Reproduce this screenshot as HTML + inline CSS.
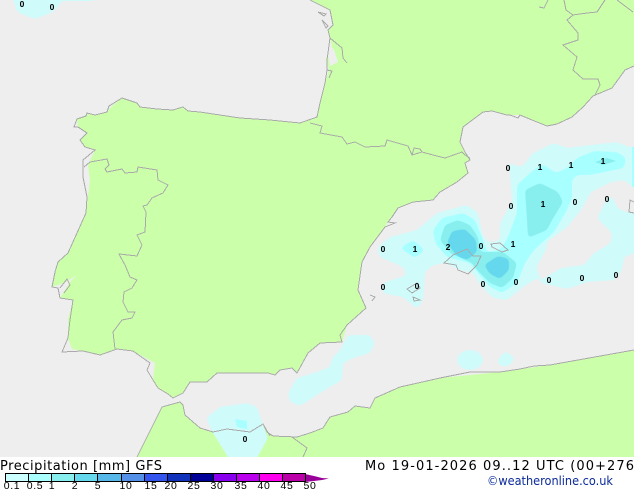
<!DOCTYPE html>
<html><head><meta charset="utf-8"><style>
html,body{margin:0;padding:0;background:#fff;width:634px;height:490px;overflow:hidden}
svg{display:block}
.l{fill:#000;font:bold 8.500px "Liberation Sans",sans-serif;text-anchor:middle}
.t{fill:#000;font-family:"DejaVu Sans","Liberation Sans",sans-serif}
.n{font-size:10.500px;text-anchor:middle;font-family:"Liberation Sans",sans-serif;letter-spacing:.6px}
</style></head><body>
<svg width="634" height="490" viewBox="0 0 634 490" xmlns="http://www.w3.org/2000/svg">
<defs>
<filter id="r" filterUnits="userSpaceOnUse" x="-20" y="-20" width="680" height="520" color-interpolation-filters="sRGB">
<feGaussianBlur stdDeviation="2"/>
<feComponentTransfer><feFuncA type="linear" slope="6" intercept="-2.500"/></feComponentTransfer>
</filter>
</defs>
<rect width="634" height="457" fill="#eeeeee"/>
<!-- Land -->
<path fill="#ccffaa" d="M78,127 77,119 86,116 87,113 95,115 107,112 112,106 122,98 137,103 140,107 157,109 173,110 183,107 188,111 200,112 240,118 270,120 300,123 317,117 320,103 325,83 329,70 326,58 332,46 330,38 328,30 333,25 330,10 310,0 634,0 634,66 625,70 612,88 593,96 583,107 572,117 557,124 547,126 532,120 520,115 507,115 492,111 483,112 463,127 460,142 465,152 470,160 465,163 468,173 457,182 440,192 433,200 413,202 398,208 392,217 388,222 385,227 370,247 362,262 358,290 366,308 347,325 342,342 320,343 308,353 297,373 292,368 280,370 275,375 268,373 217,373 207,382 190,382 183,393 173,398 168,394 158,388 153,380 155,363 133,351 117,349 100,355 83,351 72,349 68,338 68,320 73,300 60,298 70,282 77,275 64,283 52,287 55,272 58,262 68,253 77,233 86,213 90,180 88,165 95,150 85,147 80,140 87,133Z"/>
<path fill="#ccffaa" d="M137,457 162,407 180,402 183,405 185,415 200,428 213,432 227,429 250,432 263,424 267,432 273,436 297,437 310,433 323,428 330,417 348,412 355,406 370,408 375,398 400,387 440,378 500,372 550,365 634,350 634,457Z"/>
<path fill="#eeeeee" d="M329,44 334,50 338,62 330,66 327,50Z"/>
<path fill="#ccffaa" d="M470,273 476,270 472,266 467,270Z"/>
<!-- Precip 0.1 -->
<g fill="#d0fbfb" filter="url(#r)">
<path d="M377,248 390,237 417,230 437,213 467,205 478,213 483,237 490,243 500,240 500,223 512,202 510,173 507,163 522,167 533,153 554,143 567,148 591,145 617,142 629,147 645,147 645,192 634,188 624,180 611,182 591,192 581,210 567,227 547,242 546,250 536,267 541,280 561,268 584,265 594,253 611,243 612,233 597,218 608,197 613,197 617,208 629,213 645,213 645,253 634,253 624,257 622,270 614,280 587,282 567,289 541,283 537,278 523,287 507,300 493,298 480,285 473,273 460,270 445,263 433,265 425,272 423,300 417,309 403,297 382,293 383,283 407,275 403,267 380,257Z"/>
<path d="M11,-8 17,12 35,19 53,12 70,-8Z"/>
<path d="M206,418 220,407 247,403 257,407 263,425 268,438 253,465 233,465 213,433Z"/>
<path d="M340,350 348,335 370,335 375,343 370,353 353,358 343,363 342,380 320,393 300,406 290,402 288,393 297,378 317,372 330,367 332,358Z"/>
<ellipse cx="470" cy="360" rx="13" ry="10"/><path d="M497,361 505,351 515,358 509,366 500,366Z"/>
</g>
<rect x="35" y="0" width="58" height="1" fill="#d0fbfb"/>
<!-- Precip 0.5 -->
<g fill="#a8ffff" filter="url(#r)">
<path d="M400,248 413,240 425,250 415,258Z"/>
<path d="M433,230 442,218 463,213 475,220 482,237 487,252 500,250 508,237 517,213 517,185 530,173 540,165 544,165 556,173 567,168 577,158 594,151 617,152 626,158 624,168 590,175 577,175 572,180 572,198 567,210 554,232 534,250 525,263 517,283 502,293 490,287 478,273 470,263 447,257 435,243Z"/>
</g>
<path fill="#a8ffff" d="M235,419 247,421 247,429 237,427Z"/>
<rect x="632" y="147" width="2" height="40" fill="#a8ffff"/>
<!-- Precip 1 -->
<g fill="#88eeee" filter="url(#r)">
<path d="M440,240 445,225 458,220 470,225 478,237 480,252 503,252 517,263 513,278 502,288 490,283 477,270 472,263 450,253Z"/>
<path d="M525,190 540,183 558,192 563,202 552,220 547,230 528,238 527,220Z"/>
</g>
<path fill="#88eeee" d="M595,162 607,158 616,161 603,165Z"/>
<!-- Precip 2 -->
<g fill="#66d8ee" filter="url(#r)">
<path d="M447,243 452,231 465,229 476,240 477,252 467,260 457,256Z"/>
<path d="M484,265 498,256 509,259 509,270 500,279 490,274Z"/>
</g>
<!-- Coast / borders -->
<g fill="none" stroke="#aaaaaa" stroke-width="1" shape-rendering="crispEdges">
<path d="M78,127 74,127 77,119 86,116 87,113 95,115 107,112 109,106 122,98 137,103 140,107 157,109 173,110 183,107 188,111 200,112 240,118 270,120 300,123 317,117 320,103 325,83 327,70 327,60 330,38 328,30 333,25 330,10 310,0"/>
<path d="M330,38 342,48 343,58 347,63"/>
<path d="M318,12 326,14 324,16Z M322,20 328,26 326,28Z"/>
<path d="M327,70 332,71 329,78"/>
<path d="M310,123 322,126 320,133 342,137 347,144 355,142 365,147 385,146 387,140 408,146 412,155 422,152 433,155 445,158 462,152 465,155 470,158"/>
<path d="M412,155 414,148 420,149 422,152"/>
<path d="M634,66 625,70 612,88 593,96 583,107 572,117 557,124 547,126 532,120 520,115 518,118 510,115 507,115 492,111 483,112 463,127 460,142 465,152 470,160 465,163 468,173 457,182 440,192 433,200 413,202 398,208 392,217 388,222 395,223 385,227 370,247 362,262 358,290 366,308 347,325 340,335 342,342 320,343 308,353 297,373 292,368 280,370 275,375 268,373 217,373 207,382 190,382 183,393 173,398 168,394 158,388 153,380 147,370 150,363 133,351 117,349 100,355 83,351 62,352 68,338 70,320 73,300 60,298 58,288 52,287 55,272 58,262 68,253 77,233 86,213 87,197 83,177 83,160 95,150 85,147 80,140 87,133 78,127"/>
<path d="M84,167 90,162 107,159 109,165 105,169 107,172 122,169 125,173 137,172 138,167 157,170 158,180 168,185 163,193 152,198 147,205 143,206 146,212 145,232 137,235 142,245 137,256 119,254 125,265 130,277 137,280 132,288 124,292 123,302 128,312 135,312 132,318 122,320 113,332 115,349"/>
<path d="M60,288 67,279 70,285 64,293"/>
<path d="M137,457 162,407 180,402 183,405 185,415 200,428 213,432 227,429 250,432 263,424 267,432 273,436 297,437 310,433 323,428 330,417 348,412 355,406 370,408 375,398 400,387 440,378 470,372 500,372 520,369 534,366 550,365 634,350"/>
<path d="M263,424 270,436 M292,437 307,448 303,457"/>
<path d="M564,0 566,10 573,15 587,13 597,12 605,0 M573,15 567,20 578,33 578,40 563,45 577,57 573,70 583,79 598,79 600,85 595,95"/>
<path d="M617,0 625,6 633,12 M539,7 544,8 548,0"/>
<path d="M444,263 453,255 467,249 473,256 481,256 477,265 468,274 458,270 456,265Z"/>
<path d="M491,244 500,243 508,250 502,252 492,247Z"/>
<path d="M407,289 417,283 420,288 412,293Z M413,297 420,300 414,301Z"/>
<path d="M634,202 630,200 629,212 634,213"/>
<path d="M370,295 375,297 372,301"/>
</g>
<!-- Labels -->
<g class="l">
<text x="22" y="7">0</text><text x="52" y="10">0</text>
<text x="508" y="171">0</text><text x="540" y="170">1</text><text x="571" y="168">1</text><text x="603" y="164">1</text>
<text x="511" y="209">0</text><text x="543" y="207">1</text><text x="575" y="205">0</text><text x="607" y="202">0</text>
<text x="383" y="252">0</text><text x="415" y="252">1</text><text x="448" y="250">2</text><text x="481" y="249">0</text><text x="513" y="247">1</text>
<text x="383" y="290">0</text><text x="417" y="289">0</text><text x="483" y="287">0</text><text x="516" y="285">0</text><text x="549" y="283">0</text><text x="582" y="281">0</text><text x="616" y="278">0</text>
<text x="245" y="442">0</text>
</g>
<!-- Footer -->
<rect y="457" width="634" height="33" fill="#fff"/>
<text class="t" x="0" y="470" font-size="13" textLength="162" lengthAdjust="spacing">Precipitation [mm] GFS</text>
<g stroke="none">
<rect x="5" y="474" width="23" height="8" fill="#ccffff"/><rect x="28" y="474" width="23" height="8" fill="#aaffff"/><rect x="51" y="474" width="23" height="8" fill="#88eeee"/><rect x="74" y="474" width="23" height="8" fill="#66d8ee"/><rect x="97" y="474" width="24" height="8" fill="#55b8e8"/><rect x="121" y="474" width="23" height="8" fill="#5590e8"/><rect x="144" y="474" width="23" height="8" fill="#3355ee"/><rect x="167" y="474" width="23" height="8" fill="#1133bb"/><rect x="190" y="474" width="23" height="8" fill="#000099"/><rect x="213" y="474" width="23" height="8" fill="#8800ee"/><rect x="236" y="474" width="23" height="8" fill="#bb00ee"/><rect x="259" y="474" width="23" height="8" fill="#ff00ee"/><rect x="282" y="474" width="23" height="8" fill="#bb00aa"/>
<path d="M305,474 314,476 322,478 329,478.500 322,480 314,481 305,482Z" fill="#990099"/>
</g>
<path d="M5.500,473.500H305.500V481.500H5.500ZM28.500,474V481M51.500,474V481M74.500,474V481M97.500,474V481M121.500,474V481M144.500,474V481M167.500,474V481M190.500,474V481M213.500,474V481M236.500,474V481M259.500,474V481M282.500,474V481" fill="none" stroke="#000" stroke-width="1"/>
<g class="t n">
<text x="12" y="489">0.1</text><text x="35" y="489">0.5</text><text x="52" y="489">1</text><text x="75" y="489">2</text><text x="98" y="489">5</text><text x="126" y="489">10</text><text x="151" y="489">15</text><text x="171" y="489">20</text><text x="194" y="489">25</text><text x="217" y="489">30</text><text x="241" y="489">35</text><text x="264" y="489">40</text><text x="287" y="489">45</text><text x="310" y="489">50</text>
</g>
<text class="t" x="365" y="470" font-size="13" textLength="269" lengthAdjust="spacing">Mo 19-01-2026 09..12 UTC (00+276</text>
<text x="487" y="485" font-size="12" fill="#0a2a9a" font-family="DejaVu Sans,Liberation Sans,sans-serif" textLength="126" lengthAdjust="spacingAndGlyphs">©weatheronline.co.uk</text>
</svg>
</body></html>
